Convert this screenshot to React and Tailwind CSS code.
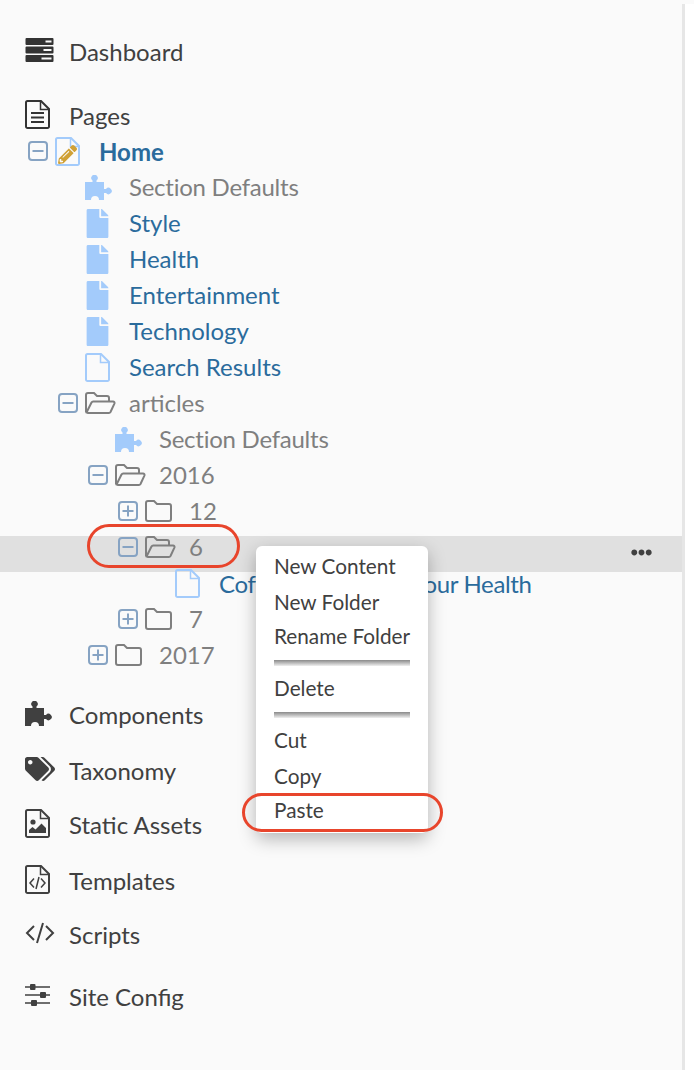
import React from "react";
import { FaEllipsisH, FaFile, FaPencilAlt, FaTags } from "react-icons/fa";

const ServerIcon = () => (
  <svg width="29" height="24" viewBox="0 0 28 24" className="text-[#333]">
    <path
      fill="currentColor"
      fillRule="evenodd"
      d="M1 0h26a1 1 0 0 1 1 1v5a1 1 0 0 1-1 1H1a1 1 0 0 1-1-1V1a1 1 0 0 1 1-1zm19 2.5v2h6v-2zM1 8.5h26a1 1 0 0 1 1 1v5a1 1 0 0 1-1 1H1a1 1 0 0 1-1-1v-5a1 1 0 0 1 1-1zm17 2.5v2h8v-2zM1 17h26a1 1 0 0 1 1 1v5a1 1 0 0 1-1 1H1a1 1 0 0 1-1-1v-5a1 1 0 0 1 1-1zm15 2.5v2h10v-2z"
    />
  </svg>
);

// page outline shared by the document style icons
const Doc = ({ className, children }) => (
  <svg width="25" height="29" viewBox="0 0 25 29" fill="none" stroke="currentColor" strokeWidth="2" className={className}>
    <path d="M2.5 1H16l8 8v17.5a1.5 1.5 0 0 1-1.5 1.5h-20A1.5 1.5 0 0 1 1 26.5v-24A1.5 1.5 0 0 1 2.5 1z" />
    <path d="M15.5 1.5V9.5h8" strokeWidth="1.5" />
    {children}
  </svg>
);

const Puzzle = ({ className }) => (
  <svg width="27" height="25" viewBox="0 0 27 25" className={className}>
    <path
      fill="currentColor"
      d="M0 7H7.5V5.5A3.2 3.2 0 1 1 11.5 5.5V7H19V14H21A3.2 3.2 0 1 1 21 18H19V25H14A4 4 0 0 0 6 25H0Z"
    />
  </svg>
);

const FolderOpen = () => (
  <svg width="31" height="22" viewBox="0 0 31 22" fill="none" stroke="currentColor" strokeWidth="2" className="text-[#7f7f7f]">
    <path d="M1 20V3a2 2 0 0 1 2-2h6l3 3h10a2 2 0 0 1 2 2v3" />
    <path d="M1.5 20.5 6.5 10.5a2 2 0 0 1 1.7-1H28a1.5 1.5 0 0 1 1.4 2.1L25.5 20a2 2 0 0 1-1.8 1H3z" />
  </svg>
);

const FolderClosed = () => (
  <svg width="27" height="22" viewBox="0 0 27 22" fill="none" stroke="currentColor" strokeWidth="2" className="text-[#7f7f7f]">
    <path d="M3 1h6l3 3h12a2 2 0 0 1 2 2v13a2 2 0 0 1-2 2H3a2 2 0 0 1-2-2V3a2 2 0 0 1 2-2z" />
  </svg>
);

const Toggle = ({ plus }) => (
  <svg width="20" height="20" viewBox="0 0 20 20" fill="none" stroke="#86a3c3" strokeWidth="2">
    <rect x="1" y="1" width="18" height="18" rx="3" />
    <path d="M4.5 10h11" />
    {plus && <path d="M10 4.5v11" />}
  </svg>
);

const HomeIcon = () => (
  <div className="relative w-[25px] h-[29px]">
    <Doc className="text-[#a3cbfb]" />
    <FaPencilAlt className="absolute left-[3px] top-[8px] text-[#d0a136] w-[19px] h-[19px]" />
  </div>
);

const blueFile = <FaFile className="text-[#a3cbfb] w-[25px] h-[29px]" />;
const blueDoc = <Doc className="text-[#a3cbfb]" />;
const puzzle = <Puzzle className="text-[#a3cbfb]" />;

const tree = [
  { pad: "pl-[28px]", toggle: "minus", icon: <HomeIcon />, label: "Home", color: "text-[#2a6b9c] font-bold mt-[1px]" },
  { pad: "pl-[58px]", icon: puzzle, label: "Section Defaults", color: "text-[#7f7f7f] tracking-[-0.25px]" },
  { pad: "pl-[58px]", icon: blueFile, label: "Style", color: "text-[#2a6b9c]" },
  { pad: "pl-[58px]", icon: blueFile, label: "Health", color: "text-[#2a6b9c]" },
  { pad: "pl-[58px]", icon: blueFile, label: "Entertainment", color: "text-[#2a6b9c]" },
  { pad: "pl-[58px]", icon: blueFile, label: "Technology", color: "text-[#2a6b9c]" },
  { pad: "pl-[58px]", icon: blueDoc, label: "Search Results", color: "text-[#2a6b9c]" },
  { pad: "pl-[58px]", toggle: "minus", icon: <FolderOpen />, label: "articles", color: "text-[#7f7f7f]" },
  { pad: "pl-[88px]", icon: puzzle, label: "Section Defaults", color: "text-[#7f7f7f] tracking-[-0.25px]" },
  { pad: "pl-[88px]", toggle: "minus", icon: <FolderOpen />, label: "2016", color: "text-[#7f7f7f]" },
  { pad: "pl-[118px]", toggle: "plus", icon: <FolderClosed />, label: "12", color: "text-[#7f7f7f]" },
  { pad: "pl-[118px]", toggle: "minus", icon: <FolderOpen />, label: "6", color: "text-[#7f7f7f]", active: true },
  { pad: "pl-[148px]", icon: blueDoc, label: "Coffee Is Good for Your Health", color: "text-[#2a6b9c] mt-[1px] tracking-[-0.35px]" },
  { pad: "pl-[118px]", toggle: "plus", icon: <FolderClosed />, label: "7", color: "text-[#7f7f7f]" },
  { pad: "pl-[88px]", toggle: "plus", icon: <FolderClosed />, label: "2017", color: "text-[#7f7f7f]" },
];

const navBottom = [
  { label: "Components", mt: "mt-[17px]", icon: <Puzzle /> },
  { label: "Taxonomy", mt: "mt-[20px]", icon: <FaTags className="w-[30px] h-[24px]" /> },
  {
    label: "Static Assets",
    mt: "mt-[18px]",
    icon: (
      <Doc>
        <circle cx="8" cy="13" r="2.6" fill="currentColor" stroke="none" />
        <path d="M4 24v-3l3.5-3 3 2.5 6-6 4.5 4.5V24z" fill="currentColor" stroke="none" />
      </Doc>
    ),
  },
  {
    label: "Templates",
    mt: "mt-[20px]",
    icon: (
      <Doc>
        <path d="M9 13.5 5 18l4 4.5M16 13.5l4 4.5-4 4.5M14 12l-3 12" strokeWidth="1.5" />
      </Doc>
    ),
  },
  {
    label: "Scripts",
    mt: "mt-[18px]",
    icon: (
      <svg width="30" height="22" viewBox="0 0 30 22" fill="none" stroke="currentColor" strokeWidth="2">
        <path d="M9 4 2 11l7 7M21 4l7 7-7 7M18 1l-6 20" />
      </svg>
    ),
  },
  {
    label: "Site Config",
    mt: "mt-[26px]",
    icon: (
      <svg width="25" height="24" viewBox="0 0 25 24" fill="none" stroke="currentColor" strokeWidth="1.5">
        <path d="M0 4h25M0 12h25M0 20h25" />
        <rect x="5" y="1" width="5.5" height="6" rx="1" fill="currentColor" stroke="none" />
        <rect x="15" y="9" width="6" height="6" rx="1" fill="currentColor" stroke="none" />
        <rect x="6" y="17" width="6" height="6" rx="1" fill="currentColor" stroke="none" />
      </svg>
    ),
  },
];

const NavRow = ({ label, icon, mt }) => (
  <div className={`flex items-center h-9 pl-[25px] text-[#404040] ${mt}`}>
    <div className="w-[44px] -mt-[4px] flex items-center shrink-0">{icon}</div>
    <span>{label}</span>
  </div>
);

const TreeRow = ({ node }) => (
  <div className={`flex items-start h-9 ${node.pad} ${node.active ? "bg-[#e0e0e0]" : ""}`}>
    <div className="w-[27px] h-[22px] flex items-center shrink-0">
      {node.toggle && <Toggle plus={node.toggle === "plus"} />}
    </div>
    <div className="w-[44px] h-[22px] flex items-center shrink-0">{node.icon}</div>
    <span className={`leading-[22px] whitespace-nowrap ${node.color}`}>{node.label}</span>
    {node.active && <FaEllipsisH className="ml-auto mr-[30px] mt-[6px] text-[#404040] w-[21px] h-[21px]" />}
  </div>
);

const MenuItem = ({ label, mt }) => (
  <div className={`h-[24px] leading-[22px] whitespace-nowrap ${mt}`}>{label}</div>
);

const MenuDivider = ({ mt }) => (
  <div className={`h-[6px] bg-gradient-to-b from-[#8a8a8a] to-[#f0f0f0] ${mt}`} />
);

export default function App() {
  return (
    <div
      className="relative w-[694px] h-[1070px] overflow-hidden bg-white text-[24px]"
      style={{ fontFamily: '"Lato", sans-serif' }}
    >
      <div className="h-[4px] bg-[#fafafa]" />
      <div className="w-[685px] h-[1066px] bg-[#fafafa] border-r-[3px] border-[#e6e6e6] pt-[30px]">
        <NavRow label="Dashboard" mt="" icon={<ServerIcon />} />
        <NavRow label="Pages" mt="mt-[28px]" icon={<Doc className="text-[#333]"><path d="M6 13h13M6 17.5h13M6 22h13" /></Doc>} />
        <div className="mt-[6px]">
          {tree.map((node, i) => (
            <TreeRow key={i} node={node} />
          ))}
        </div>
        {navBottom.map((item) => (
          <NavRow key={item.label} {...item} />
        ))}
      </div>

      {/* context menu */}
      <div className="absolute left-[256px] top-[546px] w-[172px] h-[287px] px-[18px] pt-[9px] bg-white rounded-[6px] shadow-[0_6px_18px_rgba(0,0,0,0.28)] text-[#404040] text-[20.75px]">
        <MenuItem label="New Content" />
        <MenuItem label="New Folder" mt="mt-[12px]" />
        <MenuItem label="Rename Folder" mt="mt-[10px]" />
        <MenuDivider mt="mt-[11px]" />
        <MenuItem label="Delete" mt="mt-[11px]" />
        <MenuDivider mt="mt-[11px]" />
        <MenuItem label="Cut" mt="mt-[11px]" />
        <MenuItem label="Copy" mt="mt-[12px]" />
        <MenuItem label="Paste" mt="mt-[10px]" />
      </div>

      {/* red annotation rings */}
      <div className="absolute left-[87px] top-[524px] w-[153px] h-[44px] rounded-full border-[3px] border-[#e8452c]" />
      <div className="absolute left-[242px] top-[793px] w-[201px] h-[39px] rounded-full border-[3px] border-[#e8452c]" />
    </div>
  );
}
